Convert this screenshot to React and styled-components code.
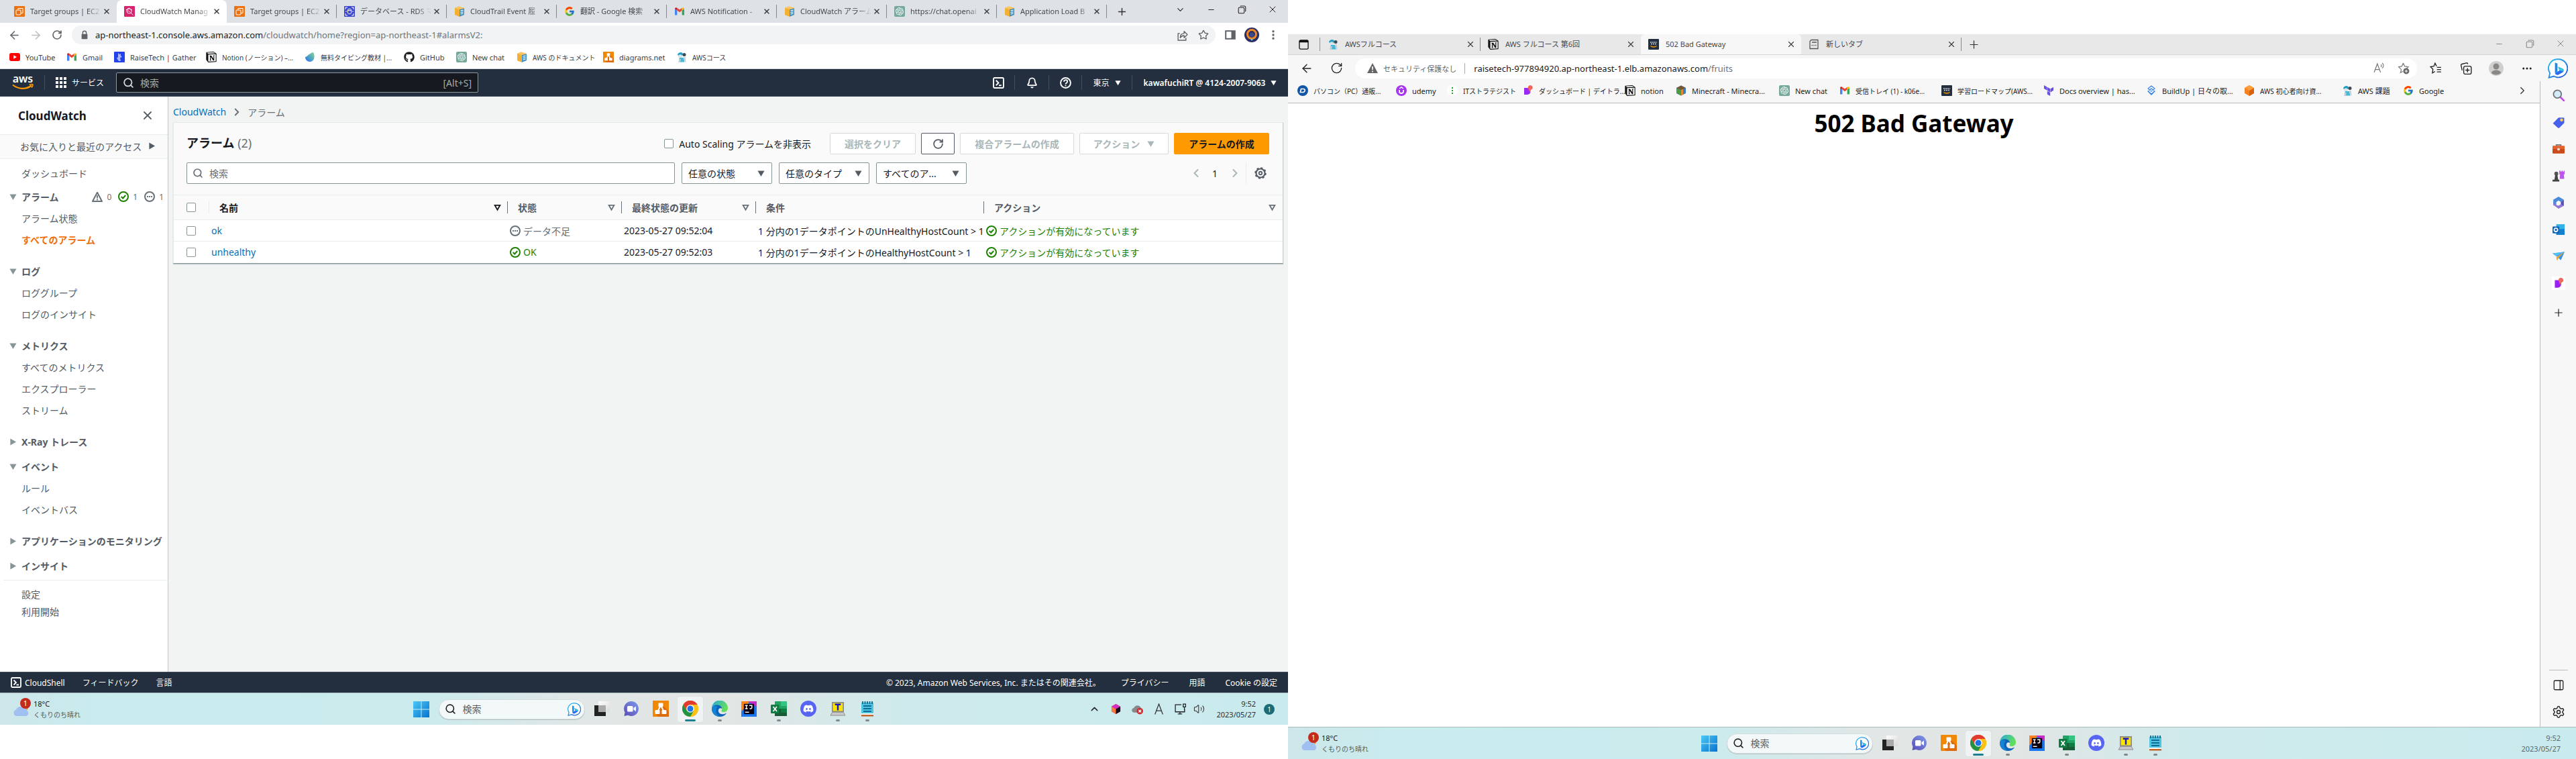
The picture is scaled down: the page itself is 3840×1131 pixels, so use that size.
import React from "react";
import styled, { createGlobalStyle, css } from "styled-components";
import {
  ArrowLeft, ArrowRight, RotateCw, Search, Star, X, Plus, Minus, ChevronDown, ChevronUp,
  ChevronLeft, ChevronRight, EllipsisVertical, Ellipsis, Bell, Settings, PanelRight,
  Volume2,
} from "lucide-react";
import { FaGithub, FaDiscord } from "react-icons/fa";
import { FcGoogle } from "react-icons/fc";
import { SiOpenai, SiNotion, SiTerraform } from "react-icons/si";

const Global = createGlobalStyle`
  *, *::before, *::after { box-sizing: border-box; }
  body { margin: 0; background: #fff; font-family: "Noto Sans", "Noto Sans CJK JP", sans-serif; font-size: 14px; color: #16191f; }
  button, input, select { font: inherit; color: inherit; margin: 0; }
  a { text-decoration: none; color: inherit; }
  svg { flex: none; display: block; }
`;

/* ---------- shared pieces ---------- */

const Desktop = styled.div`
  display: grid;
  grid-template-columns: minmax(0, 1fr) minmax(0, 1fr);
  min-height: 100vh;
`;

const Screen = styled.section`
  display: flex;
  flex-direction: column;
  min-width: 0;
  margin: ${(p) => (p.$low ? "51px 0 0" : "0 0 51px")};
`;

const IconButton = styled.button`
  display: flex;
  align-items: center;
  justify-content: center;
  flex: none;
  width: ${(p) => p.$w || 32}px;
  height: ${(p) => p.$h || 28}px;
  padding: 0;
  border: 0;
  background: none;
  color: ${(p) => p.$color || "#5f6368"};
`;

const Spacer = styled.div`
  flex: 1;
`;

const Rule = styled.span`
  flex: none;
  align-self: center;
  width: 1px;
  height: ${(p) => p.$h || 20}px;
  background: ${(p) => p.$color || "#85888c"};
`;

/* ---------- icons ---------- */

const Svg = ({ s = 16, vb = "0 0 16 16", children, ...rest }) => (
  <svg width={s} height={s} viewBox={vb} fill="none" aria-hidden="true" {...rest}>{children}</svg>
);

const BingMark = ({ s = 20 }) => (
  <Svg s={s} vb="0 0 24 24">
    <defs>
      <linearGradient id="bingRing" x1="0" y1="0" x2="1" y2="1"><stop stopColor="#27c4f2" /><stop offset="1" stopColor="#2352d3" /></linearGradient>
    </defs>
    <path d="M12.500 1a10.800 10.800 0 1 1-5.200 20.200L1.300 23l1.200-5.500A10.800 10.800 0 0 1 12.500 1z" fill="#fff" stroke="url(#bingRing)" strokeWidth="1.500" />
    <path d="M8.500 5l3 1.200v9.300l-3 2z" fill="#1b8be8" />
    <path d="M8.500 17.500l3.200-2 2.300-1.200-1.800-4.300 5.800 2.300c1.300.8 1.200 3-.2 4.200l-5.300 3c-1.700.7-3.500-.3-4-2z" fill="#2b6df0" />
    <path d="M12.200 10l5.800 2.300c.9.800.9 2 .3 3l-4.300-1z" fill="#37c6d8" />
  </Svg>
);

const GmailMark = () => (
  <Svg>
    <path d="M1 13.500V4l3.400 2.500v7z" fill="#4285f4" />
    <path d="M11.600 13.500v-7L15 4v9.500z" fill="#34a853" />
    <path d="M4.400 6.500V2.800L8 5.500l3.600-2.700v3.700L8 9.300z" fill="#ea4335" />
    <path d="M1 4.200C1 2.400 2.800 1.700 4.400 2.800v3.700z" fill="#c5221f" />
    <path d="M15 4.200c0-1.800-1.800-2.500-3.400-1.400v3.700z" fill="#fbbc04" />
  </Svg>
);

const AwsBox = () => (
  <Svg>
    <path d="M1 3l6-2.500L15 3v10l-7 2.700L1 13z" fill="#f6a623" />
    <path d="M1 3l7 2v10.700L1 13z" fill="#f2b134" />
    <path d="M1 3l6-2.500L15 3 8 5z" fill="#fbc668" />
    <path d="M8 5l7-1.500V13l-7 2.700z" fill="#3c92ca" />
    <path d="M9.500 7l4-.8M9.500 9.500l4-.6M9.500 12l4-1" stroke="#fff" strokeWidth="1.200" />
  </Svg>
);

const Penguin = () => (
  <Svg>
    <path d="M2 4c2-4 8-4 8 0l-1 2H3z" fill="#1f9fc4" />
    <circle cx="6" cy="7" r="2.800" fill="#d8e4ea" />
    <circle cx="12" cy="4.500" r="2.500" fill="#3b4a57" />
    <path d="M5 9h6l1.500 6.500h-9z" fill="#46b7d6" />
    <path d="M3 15.500L5 11h2l-1 4.500zM13 15.500L11 8h2.500l1 7.500z" fill="#c3cdd3" />
  </Svg>
);

const Tile = ({ bg, children }) => (
  <Svg><rect width="16" height="16" rx="1" fill={bg} />{children}</Svg>
);

const favicons = {
  ec2: () => (
    <Tile bg="#ec7211"><rect x="3" y="6" width="7" height="7" rx="1" stroke="#fff" /><path d="M6 6V3.500h7v7h-3" stroke="#fff" /></Tile>
  ),
  watch: () => (
    <Tile bg="#d6246e"><circle cx="7.500" cy="7.500" r="3.500" stroke="#fff" /><path d="M10 10l3.500 3.500M4 9c2-2.500 3-2.500 4.500 0M3 6l4-3 5 3" stroke="#fff" /></Tile>
  ),
  rds: () => (
    <Tile bg="#3b48cc"><ellipse cx="8" cy="5.500" rx="2.500" ry="1.200" stroke="#fff" /><path d="M5.500 5.500v5c0 1.700 5 1.700 5 0v-5M2 5V2h3M11 2h3v3M2 11v3h3M11 14h3v-3M2 8h2M12 8h2" stroke="#fff" /></Tile>
  ),
  box: AwsBox,
  google: () => <FcGoogle size={16} />,
  gmail: GmailMark,
  gpt: () => (
    <FavTile $bg="#75a99c"><SiOpenai size={12} color="#fff" /></FavTile>
  ),
  youtube: () => (
    <Svg><rect y="2" width="16" height="12" rx="3" fill="#f00" /><path d="M6.300 5.200L11 8l-4.700 2.800z" fill="#fff" /></Svg>
  ),
  gather: () => (
    <Tile bg="#2443e6"><path d="M6 2l2 2 2-1v3l2 2-3 1 1 5H7L4 10l2-2z" fill="#a7b6ff" /></Tile>
  ),
  notion: () => <SiNotion size={16} color="#111" />,
  drop: () => (
    <Svg>
      <defs><linearGradient id="dropFill" x1="0" y1="1" x2="1" y2="0"><stop offset=".2" stopColor="#3a83e0" /><stop offset="1" stopColor="#7fdc8c" /></linearGradient></defs>
      <path d="M1 8c4-1 6-6 12-7 3 5 2 14-5 14-4 0-7-3-7-7z" fill="url(#dropFill)" />
    </Svg>
  ),
  github: () => <FaGithub size={16} color="#1b1f23" />,
  diagrams: () => <DiagramMark s={16} />,
  penguin: Penguin,
  awsDark: () => (
    <Tile bg="#232f3e"><path d="M3 5h10M4 7.500h8" stroke="#cfd5db" strokeWidth="1.500" strokeDasharray="2 1" /><path d="M3.500 10.500c3 2 6 2 9 0" stroke="#f90" strokeWidth="1.500" /></Tile>
  ),
  newTab: () => (
    <Svg><path d="M2 3.500L4 1.500h10v13H2z" stroke="#555" strokeLinejoin="round" strokeWidth="1.300" /><path d="M5 5h7M4.500 9.500h1.500M7.300 9.500h1.500M10 9.500h1.500" stroke="#555" strokeWidth="1.400" /></Svg>
  ),
  dell: () => (
    <Svg><circle cx="8" cy="8" r="8" fill="#1254a8" /><path d="M5.500 5.500H9c3.500 0 2.500 5-1 5H4.300z" stroke="#fff" strokeWidth="1.600" /></Svg>
  ),
  udemy: () => (
    <Svg><circle cx="8" cy="8" r="8" fill="#a435f0" /><path d="M5 7v2.500c0 3.300 6 3.300 6 0V7" stroke="#fff" strokeWidth="1.800" /><path d="M5 5l3-2 3 2" stroke="#fff" strokeWidth="1.500" /></Svg>
  ),
  dots: () => (
    <Svg><circle cx="8" cy="8" r="8" fill="#fff" /><path d="M7 3h2v2H7zM7 7h2v2H7zM7 11h2v2H7z" fill="#1da51d" /></Svg>
  ),
  day: () => (
    <Svg><path d="M2 4h5c6 0 6 10 0 10H2z" fill="#9a2bf5" /><path d="M8 5a3.500 3.500 0 1 1 4 2l-2 3z" fill="#f2665c" /></Svg>
  ),
  minecraft: () => (
    <Svg><path d="M1 4l7-3.500L15 4v8l-7 3.500L1 12z" fill="#3b7cc4" /><path d="M1 4l7 3v8.500L1 12z" fill="#4b9b46" /><path d="M1 4l7-3.500L15 4 8 7z" fill="#7a5535" /><path d="M8 7l3-1.300v8.300l-3 1.500z" fill="#e08930" /></Svg>
  ),
  terraform: () => <SiTerraform size={16} color="#6a4fe0" />,
  buildup: () => (
    <Svg><path d="M8 1l5 4-5 4-5-4zM3 9l5 5 5-5M8 5l5 4-5 4-5-4z" stroke="#2f84e8" strokeWidth="1.300" strokeLinejoin="round" /></Svg>
  ),
  hex: () => (
    <Svg><path d="M1 4l7-4 7 4v8l-7 4-7-4z" fill="#f58220" /><path d="M8 8l7-4v8l-7 4z" fill="#d9620f" /><path d="M1 4l7-4 7 4-7 4z" fill="#fb9d3a" /></Svg>
  ),
};

const FavTile = styled.span`
  display: flex;
  align-items: center;
  justify-content: center;
  flex: none;
  width: 16px;
  height: 16px;
  border-radius: 2px;
  background: ${(p) => p.$bg};
`;

const Favicon = ({ kind }) => React.createElement(favicons[kind]);

function DiagramMark({ s = 24 }) {
  return (
    <Svg s={s} vb="0 0 24 24">
      <rect width="24" height="24" rx="1" fill="#f08705" />
      <path d="M14 6l10 10v8H8l-4-5z" fill="#df6c0c" />
      <path d="M12 7L7 17M12 7l5 10" stroke="#fff" strokeWidth="2" />
      <rect x="8.500" y="3.500" width="7" height="6" rx="1" fill="#fff" />
      <rect x="3.500" y="14" width="7" height="6" rx="1" fill="#fff" />
      <rect x="13.500" y="14" width="7" height="6" rx="1" fill="#fff" />
    </Svg>
  );
}

const LockIcon = () => (
  <Svg s={14}><rect x="3" y="6.500" width="10" height="8.500" rx="1" fill="#5f6368" /><path d="M5 7V4.500a3 3 0 0 1 6 0V7" stroke="#5f6368" strokeWidth="1.600" /></Svg>
);

const ShareIcon = () => (
  <Svg s={17}><path d="M4.500 5.500H2V15h11v-3.500" stroke="#5f6368" strokeWidth="1.300" /><path d="M5 11.500c0-4 2-6 5.500-6V2.500L15 7l-4.500 4.500V8.500C8 8.500 6.500 9.500 5 11.500z" stroke="#5f6368" strokeWidth="1.300" strokeLinejoin="round" /></Svg>
);

const PanelIcon = () => (
  <Svg s={16}><rect x="1.200" y="2.200" width="13.600" height="11.600" stroke="#5f6368" strokeWidth="2" /><path d="M9.500 2h5v12h-5z" fill="#5f6368" /></Svg>
);

const RestoreIcon = () => (
  <Svg s={13}><rect x="1.500" y="4" width="10.500" height="10.500" rx="1.500" stroke="currentColor" strokeWidth="1.300" /><path d="M4.500 2q.5-.7 1.500-.7h6q2.500 0 2.500 2.500v6q0 1-.7 1.500" stroke="currentColor" strokeWidth="1.300" /></Svg>
);

const Avatar = () => (
  <Svg s={22} vb="0 0 22 22">
    <circle cx="11" cy="11" r="11" fill="#2b2f66" /><circle cx="11" cy="10" r="6.500" stroke="#f08a24" strokeWidth="3" /><circle cx="11" cy="11" r="3.500" fill="#3c4a8c" /><path d="M9 17h4l-2 3z" fill="#63c7e6" />
  </Svg>
);

const ShellIcon = ({ s = 18 }) => (
  <Svg s={s}><rect x="1" y="1" width="14" height="14" rx="1.500" stroke="#fff" strokeWidth="1.800" /><path d="M4.500 4.500L8 8l-3.500 3.500M8.500 11.500h3.500" stroke="#fff" strokeWidth="1.800" /></Svg>
);

const HelpIcon = () => (
  <Svg s={17}><circle cx="8" cy="8" r="7" stroke="#fff" strokeWidth="1.800" /><path d="M5.700 6.300c0-3.200 4.800-3 4.800-.2C10.500 8 8 7.800 8 9.800M8 11v1.700" stroke="#fff" strokeWidth="1.700" /></Svg>
);

const OkIcon = () => (
  <Svg><circle cx="8" cy="8" r="7" stroke="#1d8102" strokeWidth="2" /><path d="M4.700 8l2.500 2.500 4-4.500" stroke="#1d8102" strokeWidth="2" /></Svg>
);
const PendingIcon = () => (
  <Svg><circle cx="8" cy="8" r="7" stroke="#687078" strokeWidth="2" /><path d="M4 8h2M7 8h2M10 8h2" stroke="#687078" strokeWidth="2" /></Svg>
);
const AlarmIcon = () => (
  <Svg><path d="M8 1.800L15 15H1z" stroke="#687078" strokeWidth="2" strokeLinejoin="round" /><path d="M8 6v4.500M8 11.500v2" stroke="#687078" strokeWidth="1.800" /></Svg>
);

const Tri = ({ dir = "down", color = "#545b64", s = 11, open }) => (
  <Svg s={s} vb="0 0 12 12">
    {dir === "down"
      ? <path d={open ? "M1.800 2h8.400L6 9.500z" : "M.5 1.500h11L6 11z"} fill={open ? "none" : color} stroke={open ? color : "none"} strokeWidth="2" />
      : <path d="M1.500 .5v11L11 6z" fill={color} />}
  </Svg>
);

const AwsLogo = () => (
  <svg width="34" height="24" viewBox="0 0 34 24" role="img" aria-label="AWS">
    <text x="16" y="12" textAnchor="middle" fontFamily="Noto Sans, sans-serif" fontWeight="600" fontSize="16" fill="#fff">aws</text>
    <path d="M1 15.500c9 7 20 7 28 1" fill="none" stroke="#f90" strokeWidth="2.200" />
    <path d="M25.500 15.300c3.500-1 5.500-.8 5.500-.3s-.6 3-2 4.500" fill="none" stroke="#f90" strokeWidth="1.500" />
  </svg>
);

/* ---------- Chrome window ---------- */

const ChromeTabs = styled.div`
  display: flex;
  align-items: stretch;
  height: 34px;
  padding-left: 10px;
  background: #dee1e6;
`;

const ChromeTab = styled.div`
  display: flex;
  align-items: center;
  flex: none;
  width: 164px;
  padding-left: 11px;
  border-radius: 8px 8px 0 0;
  background: ${(p) => (p.$active ? "#fff" : "none")};
`;

const TabTitle = styled.span`
  flex: 1;
  min-width: 0;
  margin: ${(p) => (p.$fade ? "0 2px 0 8px" : "0 8px 0 10px")};
  overflow: hidden;
  white-space: nowrap;
  font-size: 11px;
  line-height: 20px;
  color: #45494d;
  ${(p) => p.$fade && css`mask-image: linear-gradient(90deg, #000 80%, transparent);`}
`;

const TabClose = styled(IconButton)`
  width: 12px;
  height: 20px;
  margin-right: 8px;
  color: #3c4043;
`;

const TabRule = styled(Rule)`
  visibility: ${(p) => (p.$hidden ? "hidden" : "visible")};
`;

const Toolbar = styled.div`
  display: flex;
  align-items: center;
  height: ${(p) => p.$h}px;
  padding: ${(p) => p.$pad};
  background: ${(p) => p.$bg};
`;

const AddressBar = styled.div`
  display: flex;
  align-items: center;
  flex: 1;
  min-width: 0;
  height: ${(p) => p.$h || 28}px;
  margin: 0 6px;
  padding: ${(p) => p.$pad || "0 2px 0 12px"};
  border-radius: 15px;
  background: ${(p) => p.$bg};
  font-size: 13px;
  white-space: nowrap;
`;

const Url = styled.span`
  padding-left: ${(p) => p.$pad}px;
  color: #202124;
  span { color: #70757a; }
`;

const Bookmarks = styled.nav`
  display: flex;
  align-items: center;
  height: 33px;
  padding: ${(p) => p.$pad || "0 0 2px 14px"};
  border-bottom: 1px solid ${(p) => p.$line || "#d5d7da"};
  background: ${(p) => p.$bg || "#fff"};
`;

const Bookmark = styled.a`
  display: flex;
  align-items: center;
  gap: 8px;
  flex: none;
  width: ${(p) => p.$w}px;
  white-space: nowrap;
  font-size: ${(p) => (p.$dense ? 10 : 11)}px;
  color: ${(p) => (p.$dark ? "#1c1c1c" : "#3c4043")};
`;

const chromeTabs = [
  ["ec2", "Target groups | EC2"], ["watch", "CloudWatch Manag", true], ["ec2", "Target groups | EC2"],
  ["rds", "データベース - RDS マ"], ["box", "CloudTrail Event 履"], ["google", "翻訳 - Google 検索"],
  ["gmail", "AWS Notification -"], ["box", "CloudWatch アラーム"], ["gpt", "https://chat.openai"],
  ["box", "Application Load B"],
];

const chromeBookmarks = [
  ["youtube", "YouTube", 85], ["gmail", "Gmail", 71], ["gather", "RaiseTech | Gather", 137],
  ["notion", "Notion (ノーション) –...", 147, true], ["drop", "無料タイピング教材 |...", 148, true], ["github", "GitHub", 78],
  ["gpt", "New chat", 90], ["box", "AWS のドキュメント", 129, true], ["diagrams", "diagrams.net", 109], ["penguin", "AWSコース", 90, true],
];

const WindowControls = ({ color }) => (
  <>
    <IconButton $w={46} $color={color} aria-label="最小化"><Minus size={13} strokeWidth={1.800} /></IconButton>
    <IconButton $w={46} $color={color} aria-label="元に戻す"><RestoreIcon /></IconButton>
    <IconButton $w={46} $color={color} aria-label="閉じる"><X size={16} strokeWidth={1.500} /></IconButton>
  </>
);

const ChromeHeader = () => (
  <header>
    <ChromeTabs>
      {chromeTabs.map(([icon, title, active], i) => (
        <ChromeTab key={i} $active={active}>
          <Favicon kind={icon} />
          <TabTitle $fade>{title}</TabTitle>
          <TabClose aria-label="タブを閉じる"><X size={12} strokeWidth={3} /></TabClose>
          <TabRule $hidden={i < 2} />
        </ChromeTab>
      ))}
      <IconButton $w={44} $h={34} $color="#333" aria-label="新しいタブ"><Plus size={17} /></IconButton>
      <Spacer />
      <IconButton $w={46} $color="#222" aria-label="タブを検索"><ChevronDown size={15} strokeWidth={1.700} /></IconButton>
      <WindowControls color="#222" />
    </ChromeTabs>
    <Toolbar $h={36} $pad="0 6px 0 5px" $bg="#fff">
      <IconButton aria-label="戻る"><ArrowLeft size={19} /></IconButton>
      <IconButton aria-label="進む" $color="#bbbdc0"><ArrowRight size={19} /></IconButton>
      <IconButton aria-label="再読み込み"><RotateCw size={16} strokeWidth={2.500} /></IconButton>
      <AddressBar $bg="#f1f3f4">
        <LockIcon />
        <Url $pad={9}>ap-northeast-1.console.aws.amazon.com<span>/cloudwatch/home?region=ap-northeast-1#alarmsV2:</span></Url>
        <Spacer />
        <IconButton aria-label="共有"><ShareIcon /></IconButton>
        <IconButton aria-label="ブックマーク"><Star size={16} /></IconButton>
      </AddressBar>
      <IconButton aria-label="サイドパネル"><PanelIcon /></IconButton>
      <IconButton aria-label="プロフィール"><Avatar /></IconButton>
      <IconButton aria-label="メニュー"><EllipsisVertical size={18} strokeWidth={2.500} /></IconButton>
    </Toolbar>
    <Bookmarks aria-label="ブックマーク">
      {chromeBookmarks.map(([icon, text, w, dense]) => (
        <Bookmark key={text} href="#" $w={w} $dense={dense}><Favicon kind={icon} />{text}</Bookmark>
      ))}
    </Bookmarks>
  </header>
);

/* ---------- AWS console ---------- */

const ConsoleNav = styled.div`
  display: flex;
  align-items: center;
  height: 41px;
  padding: 0 0 0 18px;
  border-bottom: 1px solid #414d5c;
  background: #232f3e;
  color: #fff;
  font-size: 12px;
`;

const LogoLink = styled.a`
  margin-right: 14px;
`;

const NavButton = styled.button`
  display: flex;
  align-items: center;
  justify-content: ${(p) => (p.$w ? "center" : "flex-start")};
  gap: 8px;
  flex: none;
  width: ${(p) => (p.$w ? p.$w + "px" : "auto")};
  padding: 0 16px;
  border: 0;
  background: none;
  color: #fff;
  font-weight: ${(p) => (p.$strong ? 600 : 400)};
  white-space: nowrap;
`;

const ConsoleSearch = styled.label`
  display: flex;
  align-items: center;
  gap: 9px;
  width: 540px;
  height: 30px;
  margin-left: 2px;
  padding: 0 9px;
  border: 1px solid #8d9a9b;
  border-radius: 2px;
  background: #16191f;
  color: #a2adad;
  input { flex: 1; min-width: 0; padding: 0; border: 0; background: none; outline: 0; }
  input, span { font-size: 14px; }
  input::placeholder { color: #a2adad; opacity: 1; }
`;

const ConsoleBody = styled.div`
  display: flex;
  flex: 1;
  background: #f2f3f3;
`;

const Side = styled.aside`
  flex: none;
  width: 251px;
  border-right: 1px solid #c3c7c8;
  background: #fff;
  color: #545b64;
`;

const SideTitle = styled.div`
  display: flex;
  align-items: center;
  justify-content: space-between;
  height: 56px;
  padding: 0 12px 0 27px;
  h2 { margin: 0; font-size: 17px; font-weight: 700; color: #16191f; }
`;

const Favorites = styled.button`
  display: flex;
  align-items: center;
  gap: 10px;
  width: 100%;
  height: 37px;
  padding: 0 0 2px 30px;
  border: solid #eaeded;
  border-width: 1px 0;
  background: #fafafa;
  white-space: nowrap;
`;

const Menu = styled.nav`
  padding-top: 5px;
`;

const Group = styled.div`
  margin-bottom: ${(p) => p.$gap}px;
`;

const GroupHead = styled.button`
  display: flex;
  align-items: center;
  gap: 7px;
  width: 100%;
  height: 32px;
  padding: 0 6px 0 14px;
  border: 0;
  background: none;
  font-weight: 700;
  white-space: nowrap;
`;

const Counts = styled.span`
  display: flex;
  align-items: center;
  gap: 10px;
  margin-left: auto;
  font-size: 12px;
  font-weight: 400;
  color: #687078;
`;

const Count = styled.span`
  display: flex;
  align-items: center;
  gap: 6px;
`;

const SideLink = styled.a`
  display: flex;
  align-items: center;
  height: ${(p) => (p.$short ? 26 : 32)}px;
  padding-left: 32px;
  white-space: nowrap;
  color: ${(p) => (p.$active ? "#ec7211" : "#545b64")};
  font-weight: ${(p) => (p.$active ? 700 : 400)};
`;

const SideLine = styled.hr`
  margin: 3px 1px 7px 5px;
  border: 0;
  border-top: 1px solid #eaeded;
`;

const groups = [
  { title: "アラーム", counts: true, items: ["アラーム状態", "すべてのアラーム"] },
  { title: "ログ", items: ["ロググループ", "ログのインサイト"] },
  { title: "メトリクス", items: ["すべてのメトリクス", "エクスプローラー", "ストリーム"] },
  { title: "X-Ray トレース", items: [] },
  { title: "イベント", items: ["ルール", "イベントバス"] },
  { title: "アプリケーションのモニタリング", items: [] },
  { title: "インサイト", items: [] },
];

const Main = styled.main`
  flex: 1;
  min-width: 0;
  padding: 8px 7px 0;
`;

const Crumbs = styled.nav`
  display: flex;
  align-items: center;
  gap: 7px;
  height: 30px;
  padding-bottom: 1px;
  color: #687078;
  a { color: #0073bb; }
`;

const Card = styled.section`
  border: 1px solid #e3e8e8;
  border-right-color: #c5cccc;
  border-bottom-color: #879596;
  background: #fff;
  box-shadow: 0 1px 1px rgba(0, 28, 36, 0.2);
`;

const CardHead = styled.div`
  display: flex;
  flex-direction: column;
  gap: 12px;
  padding: 15px 20px 16px 19px;
  background: #fafafa;
`;

const Line = styled.div`
  display: flex;
  align-items: center;
  gap: ${(p) => p.$gap}px;
`;

const CardTitle = styled.h1`
  flex: 1;
  margin: 0;
  padding-bottom: 2px;
  font-size: 18px;
  line-height: 24px;
  span { font-weight: 400; color: #687078; }
`;

const CheckLabel = styled.label`
  display: flex;
  align-items: center;
  gap: 8px;
  margin-right: 20px;
  white-space: nowrap;
`;

const Check = styled.input.attrs({ type: "checkbox" })`
  appearance: none;
  display: block;
  flex: none;
  width: 14px;
  height: 14px;
  border: 1px solid #879596;
  border-radius: 2px;
  background: #fff;
`;

const Button = styled.button`
  display: flex;
  align-items: center;
  justify-content: center;
  gap: 11px;
  flex: none;
  width: ${(p) => p.$w}px;
  height: 32px;
  padding: 0;
  border: 1px solid ${(p) => (p.$primary ? "#ff9900" : p.$ready ? "#545b64" : "#d5dbdb")};
  border-radius: 2px;
  background: ${(p) => (p.$primary ? "#ff9900" : "#fff")};
  color: ${(p) => (p.$primary ? "#16191f" : p.$ready ? "#545b64" : "#aab7b8")};
  font-weight: 700;
  white-space: nowrap;
`;

const Filter = styled.label`
  display: flex;
  align-items: center;
  gap: 9px;
  flex: none;
  width: 728px;
  height: 32px;
  padding: 0 8px;
  border: 1px solid #879596;
  border-radius: 2px;
  background: #fff;
  color: #687078;
  input { flex: 1; min-width: 0; padding: 0; border: 0; background: none; outline: 0; }
  input::placeholder { color: #687078; opacity: 1; }
`;

const Picker = styled.div`
  display: grid;
  align-items: center;
  flex: none;
  width: 135px;
  select {
    grid-area: 1 / 1;
    appearance: none;
    width: 100%;
    height: 32px;
    padding: 0 0 0 9px;
    border: 1px solid #879596;
    border-radius: 2px;
    background: #fff;
  }
  svg { grid-area: 1 / 1; justify-self: end; margin-right: 11px; pointer-events: none; }
`;

const Pager = styled.div`
  display: flex;
  align-items: center;
`;

const PageNumber = styled.span`
  width: 28px;
  text-align: center;
`;

const GearButton = styled(IconButton)`
  margin-left: 8px;
`;

const Table = styled.table`
  width: 100%;
  table-layout: fixed;
  border-collapse: collapse;
  white-space: nowrap;
  th { height: 37px; padding: 0; background: #fafafa; border-top: 1px solid #eaeded; text-align: left; color: #545b64; }
  td { height: 32px; padding: 0 0 0 3px; border-top: 1px solid #eaeded; }
  td:first-child { padding-left: 19px; }
  td a { color: #0073bb; }
`;

const Col = styled.col`
  width: ${(p) => (p.$w ? p.$w + "px" : "auto")};
`;

const HeadCell = styled.div`
  display: flex;
  align-items: center;
  justify-content: space-between;
  padding-left: ${(p) => p.$pad || 15}px;
  color: ${(p) => (p.$sorted ? "#16191f" : "#545b64")};
`;

const HeadEnd = styled.span`
  display: flex;
  align-items: center;
  gap: 9px;
`;

const Status = styled.span`
  display: flex;
  align-items: center;
  gap: 4px;
  color: ${(p) => (p.$ok ? "#1d8102" : "#687078")};
`;

const ConsoleFooter = styled.footer`
  display: flex;
  align-items: center;
  height: 31px;
  padding: 0 16px;
  border-top: 1px solid #414d5c;
  background: #232f3e;
  color: #fff;
  font-size: 12px;
  white-space: nowrap;
`;

const FootLinks = styled.div`
  display: flex;
  align-items: center;
  gap: ${(p) => p.$gap}px;
  a { display: flex; align-items: center; gap: 5px; }
`;

const columns = [
  ["名前", 445, true, true], ["状態", 170, true], ["最終状態の更新", 200, true], ["条件", 340, false], ["アクション", null, true],
];
const alarms = [
  ["ok", false, "データ不足", "2023-05-27 09:52:04", "1 分内の1データポイントのUnHealthyHostCount > 1"],
  ["unhealthy", true, "OK", "2023-05-27 09:52:03", "1 分内の1データポイントのHealthyHostCount > 1"],
];

const Console = () => (
  <>
    <ConsoleNav>
      <LogoLink href="#"><AwsLogo /></LogoLink>
      <Rule $h={22} $color="#414d5c" />
      <NavButton>
        <Svg s={16}><path d="M0 0h4v4H0zM6 0h4v4H6zM12 0h4v4h-4zM0 6h4v4H0zM6 6h4v4H6zM12 6h4v4h-4zM0 12h4v4H0zM6 12h4v4H6zM12 12h4v4h-4z" fill="#fff" /></Svg>
        サービス
      </NavButton>
      <ConsoleSearch>
        <Search size={17} strokeWidth={2.500} color="#d5dbdb" />
        <input type="search" placeholder="検索" aria-label="検索" />
        <span>[Alt+S]</span>
      </ConsoleSearch>
      <Spacer />
      <NavButton $w={48} aria-label="CloudShell"><ShellIcon s={17} /></NavButton>
      <Rule $h={22} $color="#414d5c" />
      <NavButton $w={50} aria-label="通知"><Bell size={17} strokeWidth={2.500} /></NavButton>
      <Rule $h={22} $color="#414d5c" />
      <NavButton $w={48} aria-label="ヘルプ"><HelpIcon /></NavButton>
      <Rule $h={22} $color="#414d5c" />
      <NavButton $w={74}>東京<Tri color="#fff" s={9} /></NavButton>
      <Rule $h={22} $color="#414d5c" />
      <NavButton $strong $w={232}>kawafuchiRT @ 4124-2007-9063<Tri color="#fff" s={9} /></NavButton>
    </ConsoleNav>
    <ConsoleBody>
      <Side>
        <SideTitle><h2>CloudWatch</h2><IconButton $w={36} aria-label="閉じる" $color="#545b64"><X size={20} strokeWidth={2.200} /></IconButton></SideTitle>
        <Favorites>お気に入りと最近のアクセス<Tri dir="right" /></Favorites>
        <Menu aria-label="CloudWatch">
          <Group $gap={3}><SideLink href="#">ダッシュボード</SideLink></Group>
          {groups.map((g) => (
            <Group key={g.title} $gap={g.items.length ? 15 : 5}>
              <GroupHead>
                <Tri dir={g.items.length ? "down" : "right"} color="#879596" />
                {g.title}
                {g.counts && (
                  <Counts>
                    <Count><AlarmIcon />0</Count><Count><OkIcon />1</Count><Count><PendingIcon />1</Count>
                  </Counts>
                )}
              </GroupHead>
              {g.items.map((t) => <SideLink key={t} href="#" $active={t === "すべてのアラーム"}>{t}</SideLink>)}
            </Group>
          ))}
          <SideLine />
          <SideLink href="#" $short>設定</SideLink>
          <SideLink href="#" $short>利用開始</SideLink>
        </Menu>
      </Side>
      <Main>
        <Crumbs aria-label="パンくずリスト"><a href="#">CloudWatch</a><ChevronRight size={18} strokeWidth={2.500} />アラーム</Crumbs>
        <Card>
          <CardHead>
            <Line $gap={8}>
              <CardTitle>アラーム <span>(2)</span></CardTitle>
              <CheckLabel><Check />Auto Scaling アラームを非表示</CheckLabel>
              <Button $w={128} disabled>選択をクリア</Button>
              <Button $w={50} $ready aria-label="更新"><RotateCw size={17} strokeWidth={2.500} /></Button>
              <Button $w={170} disabled>複合アラームの作成</Button>
              <Button $w={133} disabled>アクション<Tri color="#aab7b8" /></Button>
              <Button $w={142} $primary>アラームの作成</Button>
            </Line>
            <Line $gap={10}>
              <Filter><Search size={16} strokeWidth={2.500} /><input type="search" placeholder="検索" aria-label="アラームを検索" /></Filter>
              {["任意の状態", "任意のタイプ", "すべてのア..."].map((t) => (
                <Picker key={t}><select aria-label={t}><option>{t}</option></select><Tri /></Picker>
              ))}
              <Spacer />
              <Pager>
                <IconButton $w={28} $color="#aab7b8" aria-label="前のページ"><ChevronLeft size={20} strokeWidth={2.400} /></IconButton>
                <PageNumber>1</PageNumber>
                <IconButton $w={32} $color="#aab7b8" aria-label="次のページ"><ChevronRight size={20} strokeWidth={2.400} /></IconButton>
                <Rule $h={32} $color="#eaeded" />
                <GearButton $w={26} $color="#545b64" aria-label="設定">
                  <Svg s={18}><circle cx="8" cy="8" r="5.800" stroke="#545b64" strokeWidth="1.900" /><circle cx="8" cy="8" r="7" stroke="#545b64" strokeWidth="1.600" strokeDasharray="2.749 2.749" /><circle cx="8" cy="8" r="2" stroke="#545b64" strokeWidth="1.600" /></Svg>
                </GearButton>
              </Pager>
            </Line>
          </CardHead>
          <Table>
            <colgroup>
              <Col $w={53} />
              {columns.map(([t, w]) => <Col key={t} $w={w} />)}
            </colgroup>
            <thead>
              <tr>
                <th><HeadCell $pad={19}><Check aria-label="すべて選択" /><Rule $h={18} $color="#eaeded" /></HeadCell></th>
                {columns.map(([t, w, sortable, sorted]) => (
                  <th key={t} scope="col">
                    <HeadCell $sorted={sorted}>
                      {t}
                      <HeadEnd>
                        {sortable && <Tri open s={11} color={sorted ? "#16191f" : "#687078"} />}
                        <Rule $h={18} $color={w ? "#687078" : "transparent"} />
                      </HeadEnd>
                    </HeadCell>
                  </th>
                ))}
              </tr>
            </thead>
            <tbody>
              {alarms.map(([name, ok, state, time, cond]) => (
                <tr key={name}>
                  <td><Check aria-label={name} /></td>
                  <td><a href="#">{name}</a></td>
                  <td><Status $ok={ok}>{ok ? <OkIcon /> : <PendingIcon />}{state}</Status></td>
                  <td>{time}</td>
                  <td>{cond}</td>
                  <td><Status $ok><OkIcon />アクションが有効になっています</Status></td>
                </tr>
              ))}
            </tbody>
          </Table>
        </Card>
      </Main>
    </ConsoleBody>
    <ConsoleFooter>
      <FootLinks $gap={26}><a href="#"><ShellIcon s={16} />CloudShell</a><a href="#">フィードバック</a><a href="#">言語</a></FootLinks>
      <Spacer />
      <FootLinks $gap={30}>
        <span>© 2023, Amazon Web Services, Inc. またはその関連会社。</span><a href="#">プライバシー</a><a href="#">用語</a><a href="#">Cookie の設定</a>
      </FootLinks>
    </ConsoleFooter>
  </>
);

/* ---------- Windows taskbar ---------- */

const Bar = styled.footer`
  display: grid;
  grid-template-columns: minmax(0, 1fr) auto minmax(0, 1fr);
  align-items: center;
  height: 48px;
  border-top: 1px solid #a9b8bb;
  background: linear-gradient(90deg, #cde6ea 0%, #c9ecee 8%, #cbebed 33%, #e1e6e6 45%, #e2e6e5 57%, #cfeaec 70%, #c9ebee 100%);
`;

const Weather = styled.div`
  display: flex;
  align-items: center;
  gap: 3px;
  padding-left: 17px;
  font-size: 11px;
  line-height: 16px;
  small { display: block; font-size: 10px; color: #555f62; }
`;

const Apps = styled.div`
  display: flex;
  align-items: center;
`;

const AppButton = styled.button`
  display: flex;
  flex-direction: column;
  align-items: center;
  justify-content: flex-end;
  gap: 4px;
  width: 38px;
  height: 38px;
  margin: 0 3px;
  padding: 0 0 1px;
  border: 0;
  border-radius: 4px;
  background: ${(p) => (p.$active ? "#f0f3f3" : "none")};
  box-shadow: ${(p) => (p.$active ? "0 0 0 1px #dde2e2" : "none")};
`;

const Mark = styled.span`
  width: ${(p) => (p.$kind === "active" ? 16 : 6)}px;
  height: 3px;
  border-radius: 2px;
  background: ${(p) => (p.$kind === "active" ? "#1f7f92" : p.$kind ? "#80898b" : "transparent")};
`;

const TaskSearch = styled.label`
  display: flex;
  align-items: center;
  gap: 10px;
  width: 218px;
  height: 30px;
  margin: 0 3px 0 4px;
  padding: 0 5px 0 8px;
  border: 1px solid #d4dddf;
  border-radius: 15px;
  background: #f3f8f9;
  box-shadow: 0 1px 0 #b5c2c4;
  input { flex: 1; min-width: 0; padding: 0; border: 0; background: none; outline: 0; color: #5a6062; }
  input::placeholder { color: #5a6062; opacity: 1; }
`;

const Tray = styled.div`
  display: flex;
  align-items: center;
  justify-content: flex-end;
  padding-right: ${(p) => (p.$full ? 20 : 23)}px;
`;

const Clock = styled.time`
  width: 73px;
  text-align: right;
  font-size: 11px;
  line-height: 16px;
  color: ${(p) => (p.$muted ? "#5d686a" : "#2b2f30")};
`;

const Badge = styled.span`
  width: 16px;
  height: 16px;
  margin-left: 12px;
  border-radius: 8px;
  background: #1c6b78;
  color: #fff;
  font-size: 10px;
  line-height: 16px;
  text-align: center;
`;

const apps = {
  "タスク ビュー": () => (<Svg s={24} vb="0 0 24 24"><defs><linearGradient id="tvFront" x1="0" y1="0" x2="1" y2="1"><stop stopColor="#fff" /><stop offset="1" stopColor="#d9d9d9" /></linearGradient></defs><path d="M1 7h17v16H1z" fill="#222" /><path d="M7 1h17v16H7z" fill="url(#tvFront)" /><path d="M7 7h11v10H7z" fill="#a9aaa9" /></Svg>),
  "チャット": () => (<Svg s={24} vb="0 0 24 24"><defs><linearGradient id="chatFill" x1="1" y1="0" x2="0" y2="1"><stop stopColor="#7f9be8" /><stop offset="1" stopColor="#5a4cb8" /></linearGradient></defs><path d="M12 1a11 11 0 1 1-5 20.800L1.500 23l1-5.500A11 11 0 0 1 12 1z" fill="url(#chatFill)" /><rect x="6" y="8" width="8.500" height="8.500" rx="1.500" fill="#fff" /><path d="M15.500 11l3.500-2.500V16l-3.500-2.500z" fill="#fff" /></Svg>),
  "draw.io": () => <DiagramMark s={24} />,
  Chrome: () => (<Svg s={24} vb="0 0 24 24"><circle cx="12" cy="12" r="12" fill="#fbc116" /><path d="M12 12L1.600 6A12 12 0 0 1 22.400 6z" fill="#e33b2e" /><path d="M12 6h10.400A12 12 0 0 1 12 24l5.200-9z" fill="#fbc116" /><path d="M6.800 15L1.600 6A12 12 0 0 0 12 24l5.200-9z" fill="#229342" /><path d="M12 6h10.400A12 12 0 0 0 1.600 6l5.200 9z" fill="#e33b2e" /><circle cx="12" cy="12" r="5.800" fill="#fff" /><circle cx="12" cy="12" r="4.500" fill="#1a73e8" /></Svg>),
  Edge: () => (<Svg s={24} vb="0 0 24 24"><defs><linearGradient id="edgeTop" x1="0" y1="0" x2="1" y2=".4"><stop stopColor="#2aa5e0" /><stop offset="1" stopColor="#62e05a" /></linearGradient></defs><path d="M0 12A12 12 0 0 1 24 11c0 4-3 6-6.500 6-3 0-3.500-1.500-2.500-3 1-2-.5-5-4-5-5 0-8 3-11 3z" fill="url(#edgeTop)" /><path d="M0 12c1-4 5-6 9-5.500C13 7 15 9.500 15 12c-3-2-6 1-5 4.500S16 22 22 18.500C19 24 13 24.500 9 23.500 3 22 0 17 0 12z" fill="#0d63b8" /><path d="M9 9c-4 3-4 11 3 15C5 24 0 19 0 12c1-4 6-5 9-3z" fill="#1584d6" /></Svg>),
  IntelliJ: () => (<Svg s={23} vb="0 0 24 24"><path d="M0 0h24v24H0z" fill="#1978f0" /><path d="M0 0h14L0 16z" fill="#fc801d" /><path d="M10 0h14v9z" fill="#c62ac9" /><path d="M4 4h16v16H4z" fill="#0b0010" /><path d="M6 6.500h4M8 6.500v5M6 11.500h4M12.500 6.500h4v3.500q0 1.500-1.500 1.500h-2" stroke="#fff" strokeWidth="1.500" /><path d="M6 17h6" stroke="#fff" strokeWidth="1.500" /></Svg>),
  Excel: () => (<Svg s={24} vb="0 0 24 24"><rect x="6" y="1" width="18" height="22" rx="1" fill="#21a366" /><path d="M15 1h9v7h-9z" fill="#33c481" /><path d="M6 12h9v11H6z" fill="#185c37" /><path d="M15 12h9v5.500h-9z" fill="#107c41" /><path d="M15 17.500h9V23h-9z" fill="#185c37" /><rect y="6" width="12.500" height="13" rx="1" fill="#107c41" /><path d="M3.500 9l5.500 7M9 9l-5.500 7" stroke="#fff" strokeWidth="1.800" /></Svg>),
  Discord: () => (<Svg s={24} vb="0 0 24 24"><circle cx="12" cy="12" r="12" fill="#5865f2" /><FaDiscord x="4" y="4" size={16} color="#fff" /></Svg>),
  "Tera Term": () => (<Svg s={23} vb="0 0 24 24"><rect x="4" y="2" width="17" height="14" fill="#fbe500" stroke="#8a8a8a" strokeWidth="1.800" /><path d="M8 5h9M12.500 5v9" stroke="#1414c8" strokeWidth="2.500" /><path d="M4 17h17l3 5H1z" fill="#c9c9c9" stroke="#8b8b8b" /></Svg>),
  "メモ帳": () => (<Svg s={24} vb="0 0 24 24"><path d="M3 3h18v18H3z" fill="#4fc3df" /><path d="M3 20h18v3.500H3z" fill="#c3662a" /><path d="M3 19h18v2H3z" fill="#fff" /><path d="M5 1v4M8.500 1v4M12 1v4M15.500 1v4M19 1v4" stroke="#0c6b91" strokeWidth="1.800" /><path d="M6 8h12M6 12h12M6 16h12" stroke="#0b6e96" strokeWidth="1.800" /></Svg>),
};
const running = { Chrome: "active", Edge: "on", Excel: "on", "Tera Term": "on", "メモ帳": "on" };

const WindowsIcon = () => (
  <Svg s={24} vb="0 0 24 24"><defs><linearGradient id="winFill" x1="0" y1="0" x2="1" y2="1"><stop stopColor="#4cc8f5" /><stop offset="1" stopColor="#0672d0" /></linearGradient></defs><path d="M0 0h11.500v11.500H0zM12.500 0H24v11.500H12.500zM0 12.500h11.500V24H0zM12.500 12.500H24V24H12.500z" fill="url(#winFill)" /></Svg>
);

const Taskbar = ({ full }) => (
  <Bar>
    <Weather>
      <svg width="30" height="36" viewBox="0 0 30 36" role="img" aria-label="天気の通知 1 件">
        <circle cx="20" cy="15" r="5" fill="#f08a24" />
        <path d="M7 28a5 5 0 0 1 0-9.500 7 7 0 0 1 12-2c3-.5 4 1 4 3 3.500 2 2.500 8.500-1.500 8.500z" fill="#9fc0f0" />
        <circle cx="21" cy="9" r="8" fill="#c42b1c" />
        <text x="21" y="13" textAnchor="middle" fontSize="11" fill="#fff">1</text>
      </svg>
      <div>18°C<small>くもりのち晴れ</small></div>
    </Weather>
    <Apps>
      <IconButton $w={44} aria-label="スタート"><WindowsIcon /></IconButton>
      <TaskSearch><Search size={17} strokeWidth={2.300} color="#222" /><input type="search" placeholder="検索" aria-label="タスクバー検索" /><BingMark s={20} /></TaskSearch>
      {Object.entries(apps).map(([name, Icon]) => (
        <AppButton key={name} $active={running[name] === "active"} aria-label={name}><Icon /><Mark $kind={running[name]} /></AppButton>
      ))}
    </Apps>
    <Tray $full={full}>
      {full && (
        <>
          <IconButton $color="#222" aria-label="隠れているインジケーター"><ChevronUp size={17} /></IconButton>
          <IconButton aria-label="Toolbox"><Svg s={15}><path d="M1 4l7-4 7 4v8l-7 4-7-4z" fill="#f0384f" /><path d="M1 4l7 4v8l-7-4z" fill="#fb7a3c" /><path d="M1 4l7-4 7 4-7 4z" fill="#d12fc0" /><path d="M8 8l7-4v8l-7 4z" fill="#1c0a20" /></Svg></IconButton>
          <IconButton aria-label="OneDrive"><Svg s={17}><path d="M3 13a3.300 3.300 0 0 1 0-6.500C5 2 11 2 13 6.500c2 1 2 5 0 6.500z" fill="#85898b" /><circle cx="11.500" cy="11" r="4.500" fill="#d3262e" /><path d="M9.700 9.200l3.600 3.600M13.300 9.200l-3.600 3.600" stroke="#fff" strokeWidth="1.300" /></Svg></IconButton>
          <IconButton aria-label="入力モード"><Svg s={17}><path d="M2.500 15.500L8 1l5.500 14.500M4.300 10.500h7.400" stroke="#333" strokeWidth="1.200" /></Svg></IconButton>
          <IconButton aria-label="ネットワーク"><Svg s={17}><path d="M9.500 2H1v10h13V8M7.500 12v3M4.500 15h6M12 1h3.500v4H12zM13.700 5v5" stroke="#222" strokeWidth="1.200" /></Svg></IconButton>
          <IconButton $w={24} $color="#333" aria-label="音量"><Volume2 size={17} strokeWidth={1.500} /></IconButton>
        </>
      )}
      <Clock $muted={!full}>9:52<br />2023/05/27</Clock>
      {full && <Badge>1</Badge>}
    </Tray>
  </Bar>
);

/* ---------- Edge window ---------- */

const EdgeTabs = styled.div`
  display: flex;
  align-items: stretch;
  height: 31px;
  background: #e8e8e8;
  border-bottom: 1px solid #d6d6d6;
`;

const EdgeTab = styled.div`
  display: flex;
  align-items: center;
  flex: none;
  width: 239px;
  padding-left: 11px;
  border-radius: 6px 6px 0 0;
  background: ${(p) => (p.$active ? "#f7f7f7" : "none")};
`;

const Warning = styled.span`
  display: flex;
  align-items: center;
  gap: 8px;
  padding-right: 12px;
  font-size: 11px;
  color: #666;
`;

const EdgeBody = styled.div`
  display: flex;
  flex: 1;
`;

const PageColumn = styled.div`
  flex: 1;
  min-width: 0;
`;

const ErrorTitle = styled.h1`
  margin: 8px 0;
  text-align: center;
  font-size: 35px;
  line-height: 44px;
  color: #000;
`;

const EdgeSide = styled.aside`
  display: flex;
  flex-direction: column;
  align-items: center;
  flex: none;
  width: 54px;
  padding: 1px 0 2px;
  border-left: 1px solid #bdbdbd;
  background: #f7f7f7;
`;

const SideButton = styled(IconButton)`
  width: 40px;
  height: 40px;
  color: #222;
`;

const SideRule = styled.hr`
  width: 28px;
  margin: 0 0 2px;
  border: 0;
  border-top: 1px solid #bdbdbd;
`;

const AddApp = styled(SideButton)`
  margin-top: 4px;
`;

const edgeTabs = [
  ["penguin", "AWSフルコース"], ["notion", "AWS フルコース 第6回"], ["awsDark", "502 Bad Gateway", true], ["newTab", "新しいタブ"],
];

const edgeBookmarks = [
  ["dell", "パソコン（PC）通販...", 147, true], ["udemy", "udemy", 76], ["dots", "ITストラテジスト", 113, true],
  ["day", "ダッシュボード | デイトラ...", 152, true], ["notion", "notion", 76], ["minecraft", "Minecraft - Minecra...", 154],
  ["gpt", "New chat", 90], ["gmail", "受信トレイ (1) - k06e...", 152, true], ["awsDark", "学習ロードマップ(AWS...", 152, true],
  ["terraform", "Docs overview | has...", 153], ["buildup", "BuildUp | 日々の取...", 146], ["hex", "AWS 初心者向け資...", 146, true],
  ["penguin", "AWS 課題", 91], ["google", "Google", 70],
];

const edgeApps = {
  "検索": () => (<Svg s={18}><path d="M10 10l5 5" stroke="#c44be8" strokeWidth="2.500" strokeLinecap="round" /><circle cx="6.500" cy="6.500" r="5.200" fill="#d5ecf8" stroke="#6f7478" strokeWidth="1.600" /></Svg>),
  "ショッピング": () => (<Svg s={18}><path d="M1 9l7-7h6.500q1 0 1 1v6L9 15.500q-1 .8-2 0L1 10q-.5-.5 0-1z" fill="#4561ee" /><circle cx="12" cy="5" r="2" fill="#ffd23d" /></Svg>),
  "ツール": () => (<Svg s={18}><path d="M5 5V2.500h6V5" stroke="#777" strokeWidth="1.500" /><rect y="4" width="16" height="10" rx="1" fill="#cc4a1a" /><path d="M0 4h16v4H0z" fill="#e4632a" /><circle cx="8" cy="8.500" r="1.800" fill="#ddd" /></Svg>),
  "ゲーム": () => (<Svg s={18}><path d="M9 1h1.500v1.500H12V1h1.500v1.500H15V1h1v5h-1l.5 6H9.500L10 6H9z" fill="#bb55ee" /><circle cx="5" cy="5" r="2.600" fill="#555" /><path d="M3.500 7h3l1 6H9v2.500H0V13h2.500z" fill="#444" /></Svg>),
  "Microsoft 365": () => (<Svg s={18}><path d="M8 0l7 4-4 3-3-2-3 2v5L1 11V4z" fill="#4b8bd8" /><path d="M15 4v8l-4 2V7z" fill="#5a4fb5" /><path d="M1 11V8l4 3 3 1 3-2 4 2-7 4z" fill="#9277d6" /></Svg>),
  Outlook: () => (<Svg s={18}><rect x="5" y="1" width="11" height="14" fill="#33b2e8" /><path d="M5 8l11-1v8H5z" fill="#1480cf" /><rect y="4" width="9" height="9" rx="1" fill="#0f65b8" /><circle cx="4.500" cy="8.500" r="2.300" stroke="#fff" strokeWidth="1.500" /></Svg>),
  Drop: () => (<Svg s={18}><path d="M0 4l16-2-5 11-4-4z" fill="#2f93ea" /><path d="M16 2L5 9l1 5 2-4z" fill="#f0a52b" /><path d="M0 4l16-2L5 8z" fill="#54bdf3" /></Svg>),
  "デイトラ": () => <Svg s={20} vb="-1 -1 18 18"><path d="M-1-1h18v18H-1z" fill="#fff" /><path d="M3 4h4c6 0 6 10 0 10H3z" fill="#9a1ff5" /><path d="M8 4a3.200 3.200 0 1 1 4 3l-2 3z" fill="#ee6a60" /></Svg>,
};

const EdgeWindow = () => (
  <Screen $low>
    <EdgeTabs>
      <IconButton $w={47} $h={31} $color="#222" aria-label="タブ操作"><Svg s={15}><rect x="1" y="1" width="14" height="14" rx="2" stroke="#111" strokeWidth="1.400" /><path d="M1 1h14v3.500H1z" fill="#111" /></Svg></IconButton>
      <Rule $color="#909090" />
      {edgeTabs.map(([icon, title, active], i) => (
        <EdgeTab key={title} $active={active}>
          <Favicon kind={icon} />
          <TabTitle>{title}</TabTitle>
          <TabClose aria-label="タブを閉じる"><X size={14} strokeWidth={2} /></TabClose>
          <TabRule $hidden={i === 1 || i === 2} />
        </EdgeTab>
      ))}
      <IconButton $w={36} $h={31} $color="#333" aria-label="新しいタブ"><Plus size={19} strokeWidth={1.500} /></IconButton>
      <Spacer />
      <WindowControls color="#888" />
    </EdgeTabs>
    <Toolbar $h={39} $pad="0 4px 0 6px" $bg="#f7f7f7">
      <IconButton $w={44} $color="#222" aria-label="戻る"><ArrowLeft size={20} strokeWidth={1.700} /></IconButton>
      <IconButton $w={44} $color="#222" aria-label="更新"><RotateCw size={19} strokeWidth={1.700} /></IconButton>
      <AddressBar $bg="#fff" $h={30} $pad="0 2px 0 18px">
        <Warning>
          <Svg s={16}><path d="M8 0l8 15H0z" fill="#666" /><path d="M8 5v5M8 11.500v2" stroke="#fff" strokeWidth="1.600" /></Svg>
          セキュリティ保護なし
        </Warning>
        <Rule $h={16} $color="#aaa" />
        <Url $pad={13}>raisetech-977894920.ap-northeast-1.elb.amazonaws.com<span>/fruits</span></Url>
        <Spacer />
        <IconButton $w={38} aria-label="音声で読み上げる"><Svg s={17}><path d="M1 14L5.500 2 10 14M2.700 10h5.600M10.500 3c1 .8 1 2.500 0 3.500M12.500 1c2 2 2 5 0 7" stroke="#777" strokeWidth="1.200" /></Svg></IconButton>
        <IconButton $w={36} aria-label="お気に入りに追加"><Svg s={18}><path d="M7.500 1l2 4.300 4.700.6-3.500 3.300M5 9.500l-3.500-3.600 4-.6L7.500 1M5 9.500l-1 4 3-1.500" stroke="#777" strokeWidth="1.100" /><circle cx="11.500" cy="11.500" r="4" fill="#666" /><path d="M11.500 9.500v4M9.500 11.500h4" stroke="#fff" /></Svg></IconButton>
      </AddressBar>
      <IconButton $w={44} aria-label="お気に入り"><Svg s={18}><path d="M9 5L7 1 5.500 5 1 5.800l3.200 3.400L3.500 14 7 12M9.500 6.500H15M9.500 9.500H15M9.500 12.500H15" stroke="#222" strokeWidth="1.200" /></Svg></IconButton>
      <IconButton $w={45} aria-label="コレクション"><Svg s={18}><path d="M3 10.500L1.500 4q-.3-1.500 1-1.800l6-1.500q1.500-.3 2 1.500" stroke="#222" strokeWidth="1.200" /><rect x="5" y="5" width="10" height="10.500" rx="2" stroke="#222" strokeWidth="1.200" /><path d="M10 7.500v5.500M7.300 10.200h5.500" stroke="#222" strokeWidth="1.200" /></Svg></IconButton>
      <IconButton $w={46} aria-label="プロファイル"><Svg s={22} vb="0 0 22 22"><circle cx="11" cy="11" r="11" fill="#d2d0ce" /><circle cx="11" cy="8" r="4.500" fill="#8a8886" /><path d="M4 18c0-6 14-6 14 0q-7 5-14 0z" fill="#8a8886" /></Svg></IconButton>
      <IconButton $w={46} $color="#222" aria-label="設定など"><Ellipsis size={18} /></IconButton>
      <IconButton $w={46} aria-label="Bing"><BingMark s={30} /></IconButton>
    </Toolbar>
    <EdgeBody>
      <PageColumn>
        <Bookmarks $bg="#f7f7f7" $line="#b9b9b9" $pad="0 12px 4px 14px" aria-label="お気に入りバー">
          {edgeBookmarks.map(([icon, text, w, dense]) => (
            <Bookmark key={text} href="#" $w={w} $dense={dense} $dark><Favicon kind={icon} />{text}</Bookmark>
          ))}
          <Spacer />
          <IconButton $w={28} $color="#333" aria-label="その他のお気に入り"><ChevronRight size={18} strokeWidth={1.700} /></IconButton>
        </Bookmarks>
        <ErrorTitle>502 Bad Gateway</ErrorTitle>
      </PageColumn>
      <EdgeSide>
        {Object.entries(edgeApps).map(([name, Icon]) => <SideButton key={name} aria-label={name}><Icon /></SideButton>)}
        <AddApp aria-label="追加"><Plus size={18} strokeWidth={1.600} /></AddApp>
        <Spacer />
        <SideRule />
        <SideButton aria-label="サイドバー"><PanelRight size={18} strokeWidth={1.700} /></SideButton>
        <SideButton aria-label="設定"><Settings size={20} strokeWidth={1.700} /></SideButton>
      </EdgeSide>
    </EdgeBody>
    <Taskbar />
  </Screen>
);

export default function App() {
  return (
    <Desktop>
      <Global />
      <Screen>
        <ChromeHeader />
        <Console />
        <Taskbar full />
      </Screen>
      <EdgeWindow />
    </Desktop>
  );
}
